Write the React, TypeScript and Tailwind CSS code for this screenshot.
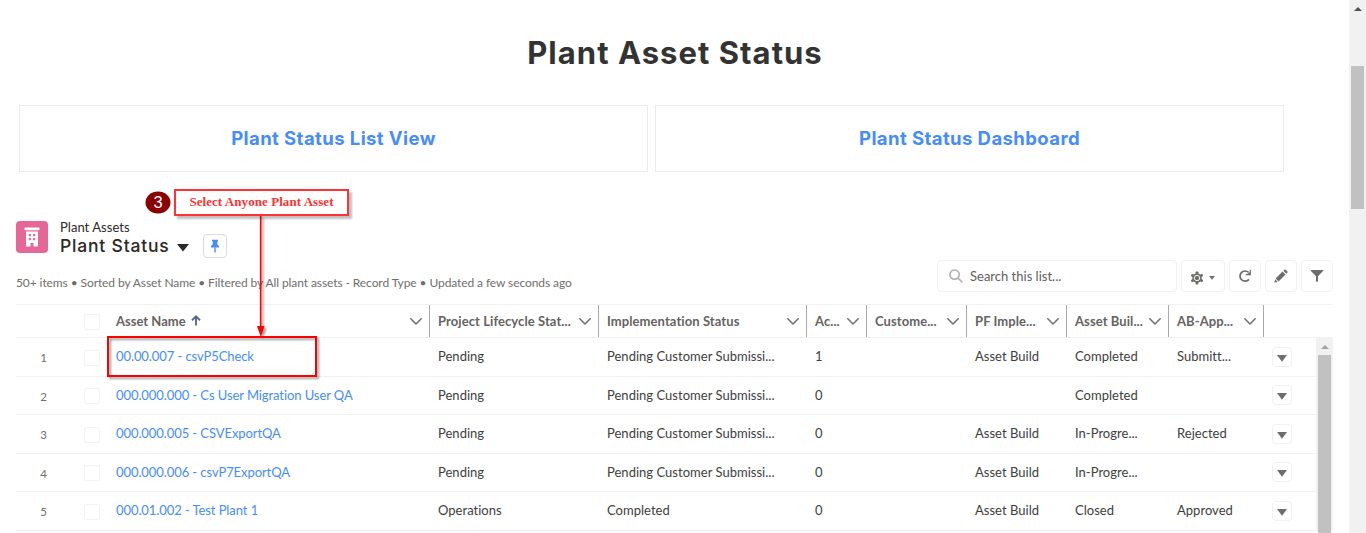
import React from "react";

type Column = { label: string };

const columns: Column[] = [
  { label: "Project Lifecycle Stat..." },
  { label: "Implementation Status" },
  { label: "Ac..." },
  { label: "Custome..." },
  { label: "PF Imple..." },
  { label: "Asset Buil..." },
  { label: "AB-App..." },
];

const rows: string[][] = [
  ["00.00.007 - csvP5Check", "Pending", "Pending Customer Submissi...", "1", "", "Asset Build", "Completed", "Submitt..."],
  ["000.000.000 - Cs User Migration User QA", "Pending", "Pending Customer Submissi...", "0", "", "", "Completed", ""],
  ["000.000.005 - CSVExportQA", "Pending", "Pending Customer Submissi...", "0", "", "Asset Build", "In-Progre...", "Rejected"],
  ["000.000.006 - csvP7ExportQA", "Pending", "Pending Customer Submissi...", "0", "", "Asset Build", "In-Progre...", ""],
  ["000.01.002 - Test Plant 1", "Operations", "Completed", "0", "", "Asset Build", "Closed", "Approved"],
];

const grid =
  "grid grid-cols-[68px_24px_322px_169px_208px_60px_100px_100px_102px_95px_1fr]";

function Chevron() {
  return (
    <svg className="h-3 w-3 shrink-0" viewBox="0 0 12 12" fill="none" stroke="#706e6b" strokeWidth="1.5" strokeLinecap="round" strokeLinejoin="round">
      <path d="M0.8 3.8 6 9 11.2 3.8" />
    </svg>
  );
}

function Checkbox() {
  return <span className="block h-4 w-4 rounded-[2px] border border-[#f3f3f3] bg-white" />;
}

function Tile({ title }: { title: string }) {
  return (
    <a className="flex h-[67px] w-[629px] items-center justify-center border border-[#ebebeb] font-['Inter'] text-[18.5px] font-bold tracking-[0.42px] text-[#468cff]">
      <span>{title}</span>
    </a>
  );
}

function ToolButton({ wide, children }: { wide?: boolean; children: React.ReactNode }) {
  return (
    <button className={`flex h-8 items-center justify-center rounded-[4px] border border-[#f1f1f1] bg-white ${wide ? "w-11 pr-[2px]" : "w-8"}`}>
      {children}
    </button>
  );
}

function Toolbar() {
  return (
    <div className="flex gap-1">
      <label className="flex h-8 w-60 items-center rounded-[4px] border border-[#f1f1f1] pl-[11px]">
        <svg className="h-[14px] w-[14px]" viewBox="0 0 14 14" fill="none" stroke="#b0adab" strokeWidth="1.6" strokeLinecap="round">
          <circle cx="5.6" cy="5.6" r="4.6" />
          <path d="M9.2 9.2 13 13" />
        </svg>
        <span className="ml-[7px] pt-[2px] text-[13px] text-[#605e5c]">Search this list...</span>
      </label>
      <ToolButton wide>
        <svg className="mt-[3px] h-[14px] w-[14px]" viewBox="0 0 14 14">
          <g fill="#706e6b">
            <circle cx="7" cy="7" r="4.7" />
            <rect x="5.6" y="0.4" width="2.8" height="13.2" rx="0.8" />
            <rect x="5.6" y="0.4" width="2.8" height="13.2" rx="0.8" transform="rotate(60 7 7)" />
            <rect x="5.6" y="0.4" width="2.8" height="13.2" rx="0.8" transform="rotate(120 7 7)" />
          </g>
          <circle cx="7" cy="7" r="2.7" fill="none" stroke="#fff" strokeWidth="0.9" />
        </svg>
        <svg className="mt-[3px] ml-[5px] h-[4px] w-[6px]" viewBox="0 0 6 4">
          <path d="M0 0H6L3 3.8Z" fill="#706e6b" />
        </svg>
      </ToolButton>
      <ToolButton>
        <svg className="h-[14px] w-[14px]" viewBox="0 0 14 14">
          <path d="M11 10.4A5.1 5.1 0 1 1 10.6 3.4" fill="none" stroke="#706e6b" strokeWidth="1.7" />
          <path d="M12.9 0.8V6.2H7.6V5.3L10.2 4.6 11.8 3V0.8Z" fill="#706e6b" />
        </svg>
      </ToolButton>
      <ToolButton>
        <svg className="h-[14px] w-[14px]" viewBox="0 0 14 14" fill="#706e6b">
          <path d="M10.3 0.7Q11 0.1 11.7 0.7L13.3 2.3Q13.9 3 13.3 3.7L12.3 4.7 9.3 1.7Z" />
          <path d="M8.5 2.5 11.5 5.5 4.6 12.4 1.6 9.4Z" />
          <path d="M1.1 10.3 3.7 12.9 0.8 13.6Q0.3 13.7 0.4 13.2Z" />
        </svg>
      </ToolButton>
      <ToolButton>
        <svg className="h-[14px] w-[14px]" viewBox="0 0 14 14" fill="#706e6b">
          <path d="M0.9 1H13.1Q13.7 1.1 13.3 1.7L8 7.3V12.2Q8 12.7 7.5 12.7H6.5Q6 12.7 6 12.2V7.3L0.7 1.7Q0.4 1.1 0.9 1Z" />
        </svg>
      </ToolButton>
    </div>
  );
}

function ListHeader() {
  return (
    <header className="mt-[47px] flex h-[85px] items-start justify-between pl-4 pr-[16px]">
      <div>
        <div className="flex">
          <span className="mt-[2px] flex h-8 w-8 items-center justify-center rounded-[4px] bg-[#e56798]">
            <svg className="h-5 w-4" viewBox="0 0 16 20" fill="#fff">
              <rect x="0.5" y="0.5" width="15" height="2.8" rx="0.8" />
              <path fillRule="evenodd" d="M2 4.5H14V19Q14 19.5 13.5 19.5H9.5V16H6.5V19.5H2.5Q2 19.5 2 19ZM4.7 7V9.2H6.9V7ZM9.1 7V9.2H11.3V7ZM4.7 11V13.2H6.9V11ZM9.1 11V13.2H11.3V11Z" />
            </svg>
          </span>
          <div className="ml-3">
            <div className="h-[17px] text-[13px] leading-[17px] tracking-[0.04px] text-[#2b2826]">
              <span>Plant Assets</span>
            </div>
            <div className="flex h-[20px] items-center">
              <span className="font-['Inter'] text-[17.5px] leading-[20px] font-medium tracking-[0.8px] text-[#2b2826]">Plant Status</span>
              <svg className="mt-[4px] ml-[7px] h-[8px] w-[12px]" viewBox="0 0 12 8">
                <path d="M0 0H12L6 7.5Z" fill="#2b2826" />
              </svg>
              <button className="ml-[14px] flex h-6 w-6 items-center justify-center rounded-[4px] border border-[#dddbda] bg-white">
                <svg className="h-[14px] w-[10px]" viewBox="0 0 10 14" fill="#468cff">
                  <path d="M2 0.8H8V2.2H7.3V5.4L9 7V8.4H1V7L2.7 5.4V2.2H2Z" />
                  <rect x="4.3" y="8.4" width="1.4" height="5" />
                </svg>
              </button>
            </div>
          </div>
        </div>
        <p className="mt-[19px] text-[12px] leading-[16px] tracking-[-0.09px] whitespace-nowrap text-[#706e6b]">
          <span>50+ items • Sorted by Asset Name • Filtered by All plant assets - Record Type • Updated a few seconds ago</span>
        </p>
      </div>
      <div className="mt-[41px]">
        <Toolbar />
      </div>
    </header>
  );
}

function Table() {
  return (
    <section className="ml-4 w-[1317px] text-[13px] text-[#3e3e3c]">
      <div className={`${grid} h-[34px] border-y border-[#f1f1f1] font-bold tracking-[0.08px] text-[#66635f]`}>
        <span />
        <span className="flex items-center pt-px">
          <Checkbox />
        </span>
        <span className="flex items-center justify-between border-r border-[#aaa] pr-[7px] pl-2">
          <span className="flex items-center gap-[5px]">
            <span className="pt-[2px] tracking-normal">Asset Name</span>
            <svg className="-mt-px h-[11px] w-[10px]" viewBox="0 0 10 11" fill="none" stroke="#54698d" strokeWidth="1.9">
              <path d="M5 10.5V1.5M1 5.2 5 1.4 9 5.2" />
            </svg>
          </span>
          <Chevron />
        </span>
        {columns.map((column) => (
          <span key={column.label} className="flex items-center justify-between border-r border-[#aaa] pr-[7px] pl-2 whitespace-nowrap">
            <span className="pt-[2px]">{column.label}</span>
            <Chevron />
          </span>
        ))}
        <span />
      </div>
      <div className="flex">
        <div className="flex-1">
          {rows.map((cells, index) => (
            <div key={cells[0]} className={`${grid} h-[38.5px] items-center border-b border-[#f1f1f1]`}>
              <span className="pt-[2px] pr-[37px] text-right text-[11.5px] text-[#706e6b]">{index + 1}</span>
              <span className="pt-[2px]">
                <Checkbox />
              </span>
              {cells.map((cell, i) => (
                <span key={i} className={`pl-2 whitespace-nowrap ${i === 0 ? "tracking-[-0.08px] text-[#468cff]" : "tracking-[0.02px]"}`}>
                  <span>{cell}</span>
                </span>
              ))}
              <span className="pl-2">
                <button className="flex h-5 w-5 items-center justify-center rounded-[4px] border border-[#f1f1f1] bg-white">
                  <svg className="mt-[3px] h-[7px] w-[10px]" viewBox="0 0 10 7">
                    <path d="M0 0H10L5 6.8Z" fill="#706e6b" />
                  </svg>
                </button>
              </span>
            </div>
          ))}
        </div>
        <div className="flex w-[17px] flex-col items-center bg-[#f1f1f1]">
          <svg className="mt-[7px] h-[4px] w-[8px]" viewBox="0 0 8 4">
            <path d="M4 0 8 4H0Z" fill="#a3a3a3" />
          </svg>
          <div className="mt-[6px] -mb-[3px] w-[13px] flex-1 bg-[#c1c1c1]" />
        </div>
      </div>
    </section>
  );
}

function Annotations() {
  return (
    <>
      <svg className="absolute top-[190px] left-[145px] h-[25px] w-[26px]" viewBox="0 0 26 25">
        <ellipse cx="13" cy="12.5" rx="12.5" ry="11" fill="#8b0000" />
        <text x="13" y="18" textAnchor="middle" fontSize="16.5" fill="#fff" className="font-['Liberation_Sans']">3</text>
      </svg>
      <svg className="absolute top-[216px] left-[250px] h-[126px] w-[24px] drop-shadow-[2px_2px_1px_rgba(0,0,0,0.4)]" viewBox="0 0 24 126">
        <path d="M10.7 0V112" stroke="#f00" strokeWidth="1.6" />
        <path d="M7 110H14.5L10.8 121Z" fill="#f00" />
      </svg>
      <div className="absolute top-[189px] left-[174px] flex h-[27px] w-[175px] items-center justify-center border-2 border-[#ff3333] bg-white font-['Liberation_Serif'] text-[13px] font-bold tracking-[0.06px] whitespace-nowrap text-[#ff3333] shadow-[3px_3px_2px_rgba(0,0,0,0.25)]">
        <span className="-mt-px">Select Anyone Plant Asset</span>
      </div>
      <svg className="absolute top-[334px] left-[105px] h-[48px] w-[218px] drop-shadow-[2px_2px_1px_rgba(0,0,0,0.4)]" viewBox="0 0 218 48">
        <rect x="3" y="3" width="208" height="39" fill="none" stroke="#f00" strokeWidth="2" />
      </svg>
    </>
  );
}

export default function App() {
  return (
    <div className="relative flex h-[533px] w-[1366px] overflow-hidden bg-white font-['Lato',sans-serif]">
      <main className="w-[1349px]">
        <h1 className="flex h-[105px] items-center justify-center pt-[2px] pl-px font-['Inter'] text-[31px] font-bold tracking-[1.03px] text-[#333]">
          <span>Plant Asset Status</span>
        </h1>
        <div className="flex gap-[7px] pl-[19px]">
          <Tile title="Plant Status List View" />
          <Tile title="Plant Status Dashboard" />
        </div>
        <ListHeader />
        <Table />
      </main>
      <div className="flex w-[17px] flex-col items-center bg-[#f1f1f1]">
        <svg className="mt-[7px] h-[4px] w-[8px]" viewBox="0 0 8 4">
          <path d="M4 0 8 4H0Z" fill="#505050" />
        </svg>
        <div className="mt-[55px] h-[143px] w-[13px] bg-[#c1c1c1]" />
      </div>
      <Annotations />
    </div>
  );
}
